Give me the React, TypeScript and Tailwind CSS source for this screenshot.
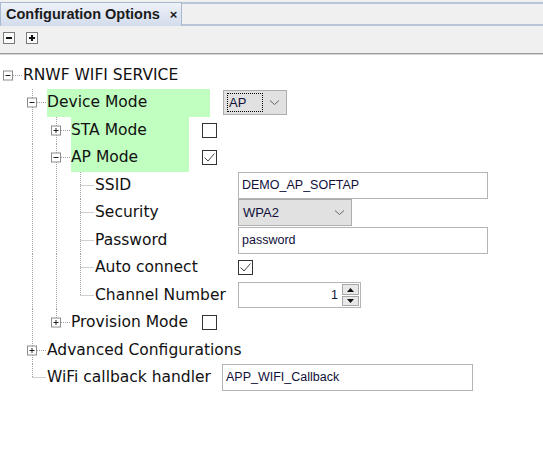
import React from 'react';

const LABEL_FONT = { fontFamily: '"DejaVu Sans", Verdana, sans-serif' };
const INPUT_FONT = { fontFamily: '"Liberation Sans", Tahoma, Arial, sans-serif' };

const LINE = '#a0a0a0';

// tree guide cell: vertical line through the column when an ancestor continues
const GuideCell = ({ line }: { line: boolean }) => (
  <svg width={24} height={27.5} className="shrink-0 block">
    {line && <line x1={8.5} y1={0} x2={8.5} y2={27.5} stroke={LINE} strokeDasharray="1 1" />}
  </svg>
);

const OwnCell = ({
  expander,
  up,
  down,
}: {
  expander?: '+' | '-';
  up: boolean;
  down: boolean;
}) => (
  <svg width={23} height={27.5} className="shrink-0 block">
    {up && <line x1={8.5} y1={0} x2={8.5} y2={14} stroke={LINE} strokeDasharray="1 1" />}
    {down && <line x1={8.5} y1={14} x2={8.5} y2={27.5} stroke={LINE} strokeDasharray="1 1" />}
    <line x1={expander ? 13 : 8.5} y1={13.5} x2={22} y2={13.5} stroke={LINE} strokeDasharray="1 1" />
    {expander && (
      <g>
        <rect x={3.5} y={9} width={9} height={9} fill="#fff" stroke="#8c8c8c" />
        <line x1={5.5} y1={13.5} x2={10.5} y2={13.5} stroke="#222" />
        {expander === '+' && <line x1={8} y1={11} x2={8} y2={16} stroke="#222" />}
      </g>
    )}
  </svg>
);

const Checkbox = ({ checked }: { checked?: boolean }) => (
  <div className="w-[15px] h-[15px] border border-[#333] bg-white flex items-center justify-center">
    {checked && (
      <svg width={13} height={13} className="block">
        <path d="M1.5 6.5 L5 10 L11.5 2.5" fill="none" stroke="#444" strokeWidth={1} />
      </svg>
    )}
  </div>
);

const Chevron = () => (
  <svg width={11} height={7} className="block">
    <path d="M1 1.5 L5.5 5.5 L10 1.5" fill="none" stroke="#666" strokeWidth={1} />
  </svg>
);

const Combo = ({ value, width, focus }: { value: string; width: string; focus?: boolean }) => (
  <div
    className={`${width} h-full bg-[#e1e1e1] border border-[#adadad] flex items-center text-[13px] text-[#10103a]`}
    style={INPUT_FONT}
  >
    {focus ? (
      <span className="ml-[3px] h-[19px] w-[36px] border border-dotted border-black flex items-center pl-[1px]">
        {value}
      </span>
    ) : (
      <span className="ml-[4px] flex-1">{value}</span>
    )}
    <span className={focus ? 'ml-auto mr-[6px]' : 'mr-[6px]'}>
      <Chevron />
    </span>
  </div>
);

const TextBox = ({ value, width }: { value: string; width: string }) => (
  <div
    className={`${width} h-[27px] bg-white border border-[#b4b4b4] flex items-center pl-[3px] text-[12.5px] text-[#10103a]`}
    style={INPUT_FONT}
  >
    {value}
  </div>
);

const Spinner = () => (
  <div className="w-[123px] h-[26px] bg-white border border-[#b4b4b4] flex">
    <div className="flex-1 flex items-center justify-end pr-[4px] text-[12.5px] text-[#10103a]" style={INPUT_FONT}>
      1
    </div>
    <div className="w-[18px] flex flex-col gap-[1px] p-[1px] pl-0">
      <div className="flex-1 bg-[#e8e8e8] border border-[#a8a8a8] flex items-center justify-center">
        <svg width={7} height={4} className="block"><path d="M0 4 L3.5 0 L7 4 Z" fill="#111" /></svg>
      </div>
      <div className="flex-1 bg-[#e8e8e8] border border-[#a8a8a8] flex items-center justify-center">
        <svg width={7} height={4} className="block"><path d="M0 0 L3.5 4 L7 0 Z" fill="#111" /></svg>
      </div>
    </div>
  </div>
);

type RowProps = {
  guides: boolean[];
  expander?: '+' | '-';
  up: boolean;
  down: boolean;
  label: string;
  labelW?: string;
  gap?: string;
  green?: boolean;
  widget?: React.ReactNode;
};

const Row = ({ guides, expander, up, down, label, labelW, gap, green, widget }: RowProps) => (
  <div className="h-[27.5px] flex items-stretch">
    {guides.map((g, i) => (
      <GuideCell key={i} line={g} />
    ))}
    <OwnCell expander={expander} up={up} down={down} />
    <div
      className={`${labelW ?? ''} shrink-0 flex items-center text-[15.5px] text-[#111] whitespace-nowrap ${green ? 'bg-[#c0ffc0]' : ''}`}
      style={LABEL_FONT}
    >
      {label}
    </div>
    {widget && <div className={`${gap ?? 'ml-[13px]'} flex items-center`}>{widget}</div>}
  </div>
);

const ToolButton = ({ plus }: { plus?: boolean }) => (
  <svg width={12} height={12} className="block">
    <rect x={0.5} y={0.5} width={11} height={11} fill="#fafafa" stroke="#7a7a7a" />
    <rect x={3} y={5} width={6} height={2} fill="#111" />
    {plus && <rect x={5} y={3} width={2} height={6} fill="#111" />}
  </svg>
);

export default function App() {
  return (
    <div className="w-[543px] h-[456px] bg-white flex flex-col overflow-hidden">
      {/* tab strip */}
      <div className="h-[26px] bg-[#f0f0f0] flex items-end shrink-0">
        <div
          className="h-[24px] w-[182px] bg-gradient-to-b from-[#eef2f9] to-[#d3dcec] border-t border-l border-r border-[#a9b8cf] flex items-center pl-[5px] text-[14.5px] font-bold text-[#1b1b1b]"
          style={{ fontFamily: '"Liberation Sans", Tahoma, sans-serif' }}
        >
          Configuration Options
          <span className="ml-[10px] text-[13px]">×</span>
        </div>
        <div className="flex-1 h-[24px] border-t-2 border-b-2 border-[#b9c5d8] bg-[#f0f0f0]" />
      </div>

      {/* toolbar */}
      <div className="h-[27px] bg-[#f0f0f0] flex items-start pt-[6px] pl-[3px] gap-[11px] shrink-0">
        <ToolButton />
        <ToolButton plus />
      </div>
      <div className="h-[1px] bg-[#9c9c9c] shrink-0" />
      <div className="h-[1px] bg-[#d4d4d4] shrink-0" />

      {/* property tree */}
      <div className="flex flex-col pt-[6.5px]">
        <Row guides={[]} expander="-" up={false} down={false} label="RNWF WIFI SERVICE" />
        <Row
          guides={[false]}
          expander="-"
          up
          down
          label="Device Mode"
          labelW="w-[163px]"
          green
          widget={<div className="h-[25px]"><Combo value="AP" width="w-[64px]" focus /></div>}
        />
        <Row
          guides={[false, true]}
          expander="+"
          up
          down
          label="STA Mode"
          labelW="w-[118px]"
          green
          widget={<Checkbox />}
        />
        <Row
          guides={[false, true]}
          expander="-"
          up
          down
          label="AP Mode"
          labelW="w-[118px]"
          green
          widget={<Checkbox checked />}
        />
        <Row
          guides={[false, true, true]}
          up
          down
          label="SSID"
          labelW="w-[131px]"
          gap="ml-[12px]"
          widget={<TextBox value="DEMO_AP_SOFTAP" width="w-[250px]" />}
        />
        <Row
          guides={[false, true, true]}
          up
          down
          label="Security"
          labelW="w-[131px]"
          gap="ml-[12px]"
          widget={<div className="h-[27px]"><Combo value="WPA2" width="w-[114px]" /></div>}
        />
        <Row
          guides={[false, true, true]}
          up
          down
          label="Password"
          labelW="w-[131px]"
          gap="ml-[12px]"
          widget={<TextBox value="password" width="w-[250px]" />}
        />
        <Row
          guides={[false, true, true]}
          up
          down
          label="Auto connect"
          labelW="w-[131px]"
          gap="ml-[12px]"
          widget={<Checkbox checked />}
        />
        <Row
          guides={[false, true, true]}
          up
          down={false}
          label="Channel Number"
          labelW="w-[131px]"
          gap="ml-[12px]"
          widget={<Spinner />}
        />
        <Row
          guides={[false, true]}
          expander="+"
          up
          down={false}
          label="Provision Mode"
          labelW="w-[118px]"
          widget={<Checkbox />}
        />
        <Row guides={[false]} expander="+" up down label="Advanced Configurations" />
        <Row
          guides={[false]}
          up
          down={false}
          label="WiFi callback handler"
          labelW="w-[163px]"
          gap="ml-[12px]"
          widget={<TextBox value="APP_WIFI_Callback" width="w-[251px]" />}
        />
      </div>
    </div>
  );
}
